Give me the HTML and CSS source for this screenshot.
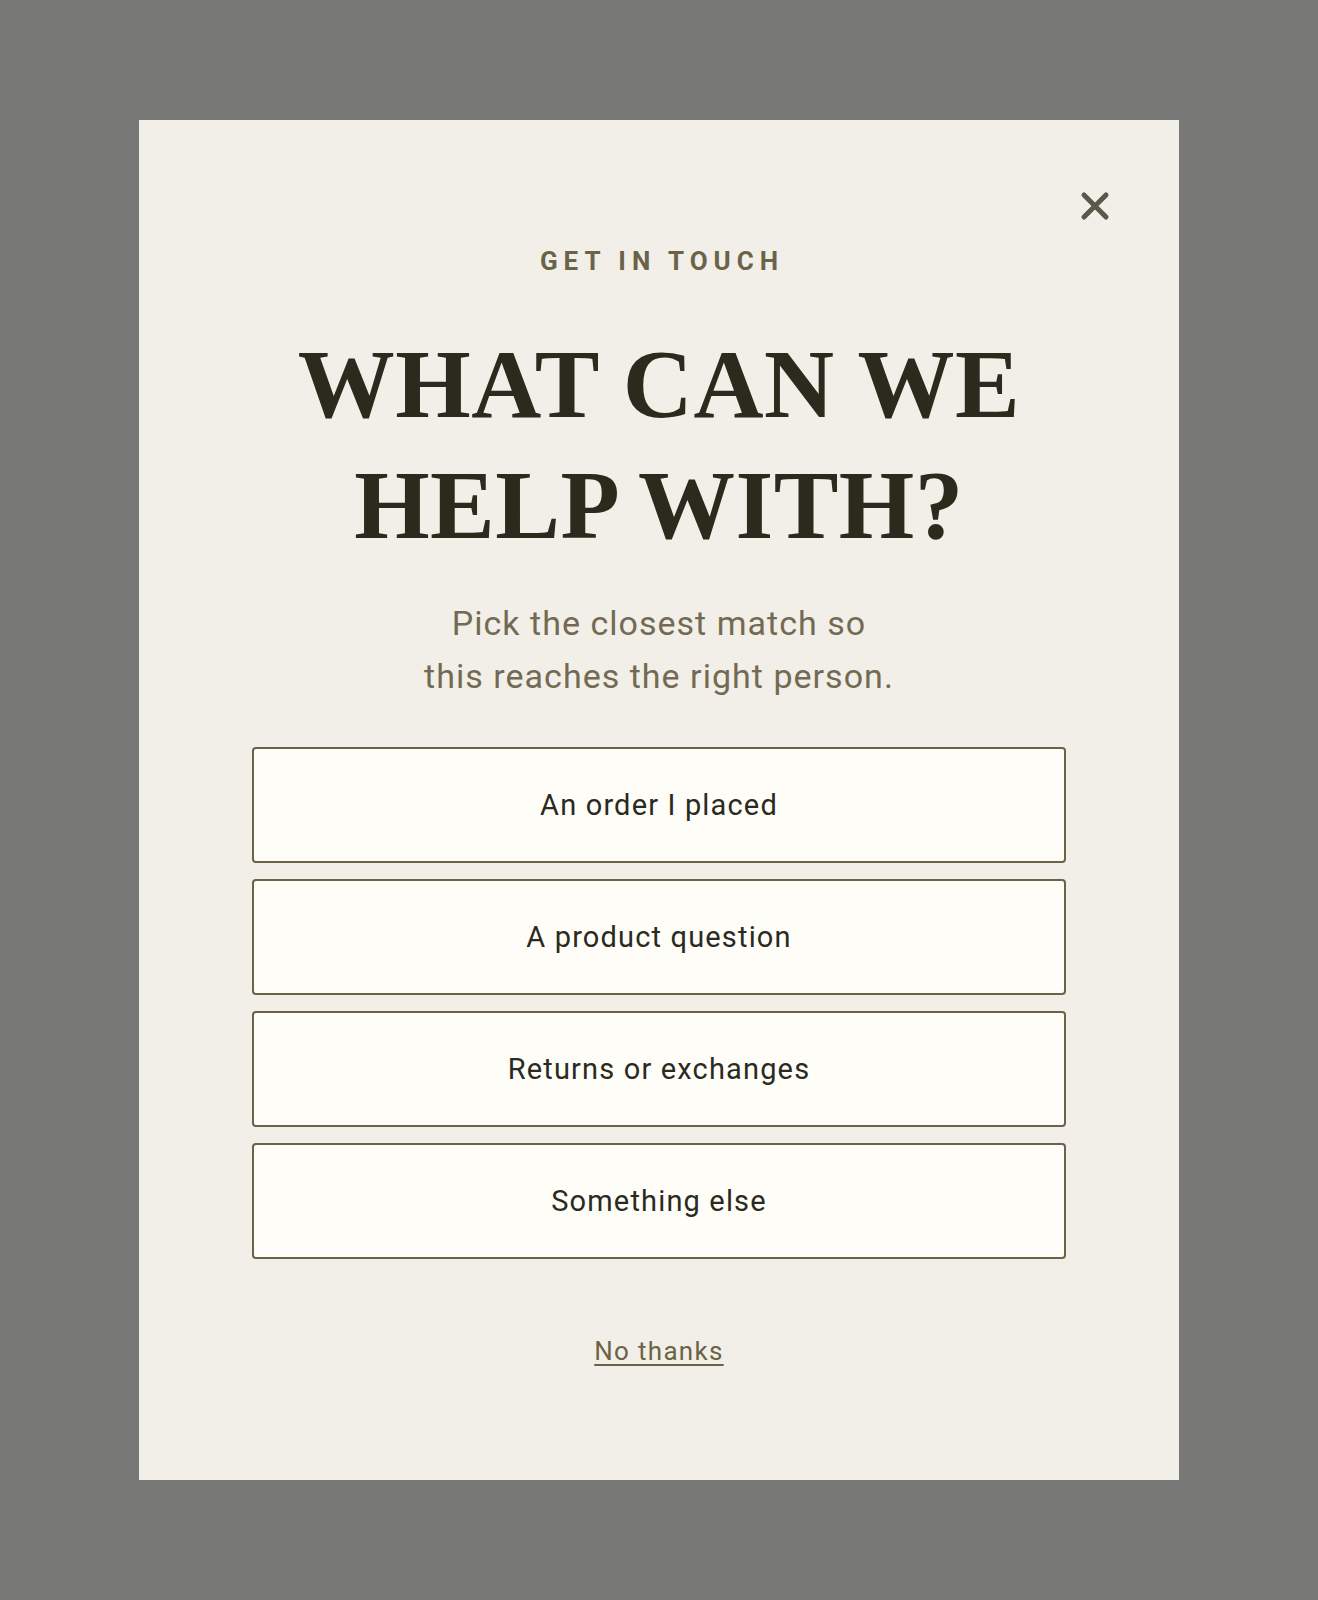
FILE: index.html
```html
<!DOCTYPE html>
<html lang="en">
<head>
<meta charset="utf-8">
<title>Get in touch</title>
<link rel="stylesheet" href="styles.css">
</head>
<body>
<div class="overlay">
  <div class="modal" role="dialog" aria-labelledby="title">
    <button class="close" aria-label="Close">
      <svg viewBox="0 0 30 30" width="30" height="30"><path d="M4 4 L26 26 M26 4 L4 26" stroke="#5a574b" stroke-width="5" stroke-linecap="round" fill="none"/></svg>
    </button>
    <p class="eyebrow">GET IN TOUCH</p>
    <h1 class="title" id="title">WHAT CAN WE<br>HELP WITH?</h1>
    <p class="subtitle">Pick the closest match so<br>this reaches the right person.</p>
    <div class="options">
      <button class="option">An order I placed</button>
      <button class="option">A product question</button>
      <button class="option">Returns or exchanges</button>
      <button class="option">Something else</button>
    </div>
    <a class="dismiss" href="#">No thanks</a>
  </div>
</div>
</body>
</html>
```
FILE: styles.css
```css
html, body {
  margin: 0;
  padding: 0;
}
body {
  background: #787876;
  font-family: Roboto, "Liberation Sans", sans-serif;
}
.overlay {
  min-height: 1600px;
  display: flex;
  align-items: center;
  justify-content: center;
}
.modal {
  position: relative;
  width: 1040px;
  height: 1360px;
  box-sizing: border-box;
  background: #f2efe8;
  padding: 125px 113px 0;
  display: flex;
  flex-direction: column;
  align-items: center;
  text-align: center;
}
.close {
  position: absolute;
  top: 71px;
  right: 69px;
  width: 30px;
  height: 30px;
  padding: 0;
  border: 0;
  background: none;
  cursor: pointer;
  display: flex;
}
.eyebrow {
  margin: 0;
  font-size: 26px;
  line-height: 32px;
  font-weight: 700;
  letter-spacing: 0.23em;
  margin-right: -0.23em;
  color: #6b6347;
}
.title {
  margin: 47px 0 0;
  font-family: "Liberation Serif", "Times New Roman", serif;
  font-weight: 700;
  font-size: 97px;
  line-height: 121px;
  letter-spacing: 0.5px;
  color: #2a2a1d;
}
.subtitle {
  margin: 31px 0 0;
  font-size: 34px;
  line-height: 53px;
  letter-spacing: 0.03em;
  color: #736a53;
}
.options {
  margin-top: 44px;
  width: 100%;
  display: flex;
  flex-direction: column;
  gap: 16px;
}
.option {
  height: 116px;
  box-sizing: border-box;
  border: 2px solid #6b6347;
  border-radius: 4px;
  background: #fefdf8;
  font-family: Roboto, "Liberation Sans", sans-serif;
  font-size: 29px;
  letter-spacing: 0.04em;
  color: #2a2a20;
  cursor: pointer;
}
.dismiss {
  margin-top: 76px;
  font-size: 26px;
  line-height: 32px;
  letter-spacing: 0.05em;
  color: #6b6347;
  text-decoration: underline;
  text-underline-offset: 4px;
  text-decoration-thickness: 2px;
}
```
